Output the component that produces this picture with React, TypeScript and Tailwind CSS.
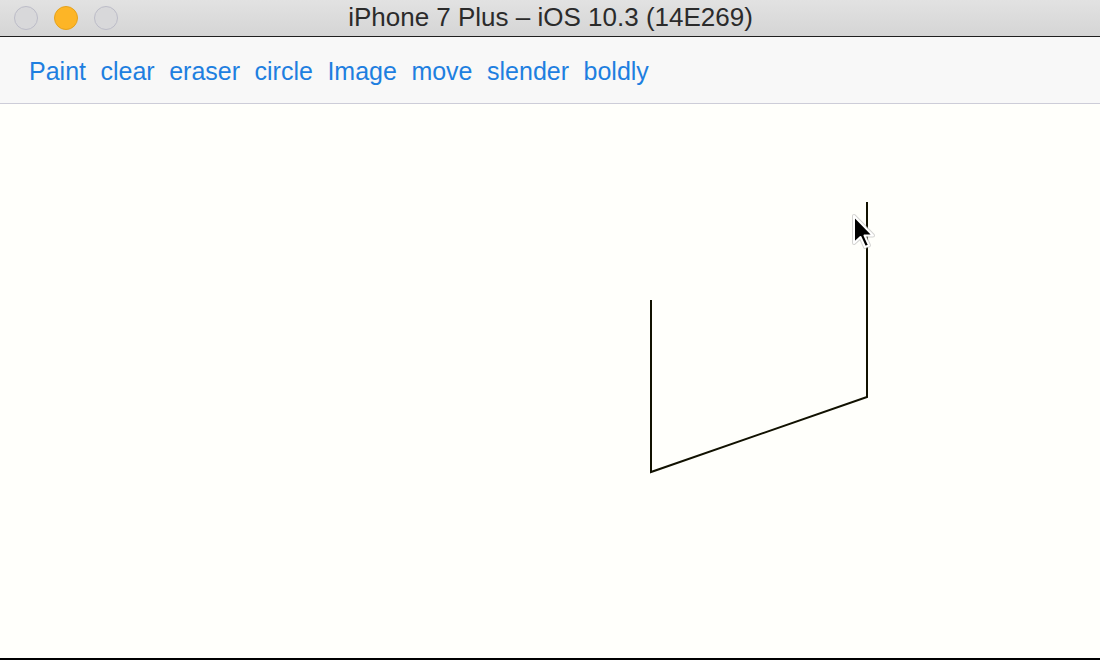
const buttons = ["Paint", "clear", "eraser", "circle", "Image", "move", "slender", "boldly"]

const Light = ({ color }: { color: "off" | "on" }) => (
  <div
    className={
      color === "on"
        ? "w-[24px] h-[24px] rounded-full bg-[#fdb526] border border-[#e5a21c]"
        : "w-[24px] h-[24px] rounded-full bg-[#d8d8da] border border-[#bcbcc8]"
    }
  />
)

// mac arrow pointer, grey halo + white outline
const Cursor = () => {
  const d = "M4 3 L4 30 L10.5 24 L15 34 L19 32.3 L14.5 22.5 L23 22.5 Z"
  return (
    <svg width="28" height="40" viewBox="0 0 28 40" className="absolute left-[850px] top-[109px]">
      <path d={d} fill="none" stroke="#b8b8b8" strokeWidth="4" strokeLinejoin="round" opacity="0.6" />
      <path d={d} fill="#000" stroke="#fff" strokeWidth="2" strokeLinejoin="round" />
    </svg>
  )
}

const App = () => {
  return (
    <div className="w-[1100px] h-[660px] flex flex-col bg-[#fffffb] overflow-hidden" style={{ fontFamily: '"Liberation Sans", Arial, sans-serif' }}>
      <div className="relative h-[37px] shrink-0 flex items-center bg-gradient-to-b from-[#e2e2e2] to-[#d5d5d5] border-b border-[#1f1f1f]">
        <div className="flex items-center gap-[16px] pl-[14px] pb-[1px]">
          <Light color="off" />
          <Light color="on" />
          <Light color="off" />
        </div>
        <div className="absolute inset-0 flex items-center justify-center text-[26px] leading-none text-[#2b2b2b] pb-[3px] pl-[1px]">
          iPhone 7 Plus – iOS 10.3 (14E269)
        </div>
      </div>
      <div className="h-[67px] shrink-0 flex items-center pl-[29px] gap-[14.5px] bg-[#f8f8f8] border-b border-[#cdcdd8]">
        {buttons.map((b) => (
          <button key={b} className="text-[25px] text-[#1e7fe0] leading-none pt-[2px]">
            {b}
          </button>
        ))}
      </div>
      <div className="relative flex-1 border-b-2 border-black">
        <svg className="absolute inset-0 w-full h-full">
          <polyline
            points="651,196 651,368 867,293 867,98"
            fill="none"
            stroke="#111100"
            strokeWidth="2"
            strokeLinejoin="miter"
          />
        </svg>
        <Cursor />
      </div>
    </div>
  )
}

export default App
